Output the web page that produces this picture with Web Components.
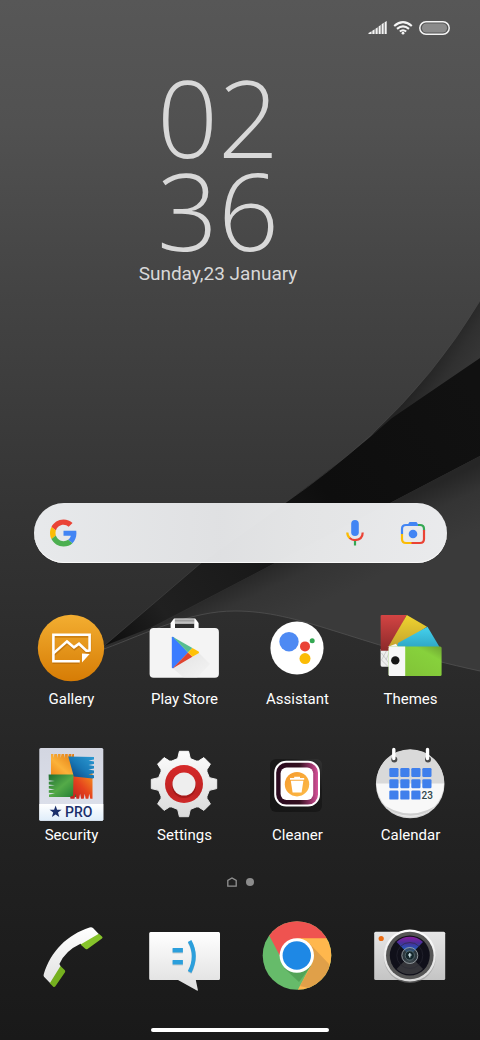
<!DOCTYPE html>
<html lang="en">
<head>
<meta charset="utf-8">
<meta name="viewport" content="width=device-width, initial-scale=1">
<title>Home</title>
<style>
  body {
    margin: 0;
    background: #1b1b1b;
    color: #fff;
    font-family: Roboto, "Liberation Sans", sans-serif;
  }
</style>
</head>
<body>

<home-screen>
  <status-bar slot="status"></status-bar>
  <clock-widget slot="clock" time="02 36">Sunday,23 January</clock-widget>
  <search-widget slot="search"></search-widget>
  <app-grid slot="apps">
    <app-shortcut icon="gallery">Gallery</app-shortcut>
    <app-shortcut icon="play">Play Store</app-shortcut>
    <app-shortcut icon="assistant">Assistant</app-shortcut>
    <app-shortcut icon="themes">Themes</app-shortcut>
    <app-shortcut icon="security">Security</app-shortcut>
    <app-shortcut icon="settings">Settings</app-shortcut>
    <app-shortcut icon="cleaner">Cleaner</app-shortcut>
    <app-shortcut icon="calendar">Calendar</app-shortcut>
  </app-grid>
  <page-indicator slot="pages"></page-indicator>
  <app-grid slot="dock">
    <app-shortcut icon="phone"></app-shortcut>
    <app-shortcut icon="messages"></app-shortcut>
    <app-shortcut icon="chrome"></app-shortcut>
    <app-shortcut icon="camera"></app-shortcut>
  </app-grid>
</home-screen>

<script>
// outline of a gear with 8 teeth around (40, 40)
function gearPath() {
  const shape = [[-17, 26], [-13, 27], [-8, 33], [8, 33], [13, 27], [17, 26]];
  const points = [];
  for (let i = 0; i < 8; i++) {
    for (const [deg, r] of shape) {
      const a = (i * 45 + deg - 90) * Math.PI / 180;
      points.push((40 + r * Math.cos(a)).toFixed(1) + ' ' + (40 + r * Math.sin(a)).toFixed(1));
    }
  }
  return 'M' + points.join('L') + 'Z';
}

function calendarDays() {
  let out = '';
  for (let row = 0; row < 3; row++) {
    for (let col = 0; col < 4; col++) {
      if (row === 2 && col === 3) continue;
      out += `<rect x="${19.3 + col * 11}" y="${24 + row * 11.3}" width="9.2" height="9" rx="1.2"/>`;
    }
  }
  return out;
}

const ICONS = {
  gallery: `
    <defs>
      <linearGradient id="g" x1="0" y1="0" x2="0" y2="1">
        <stop offset="0" stop-color="#f3ae31"/><stop offset="1" stop-color="#d67c05"/>
      </linearGradient>
    </defs>
    <circle cx="40" cy="40" r="33.2" fill="url(#g)"/>
    <g fill="none" stroke="#a85e00" stroke-opacity=".45" stroke-width="2.6" transform="translate(.4 1.6)">
      <path d="M47.8 53.2H22.4V26.8H58.6V42"/>
      <path d="M22.4 45.4L36 33.4l7 6 5-3.6 7.4 7h3.4"/>
    </g>
    <g fill="none" stroke="#fff" stroke-width="2.6">
      <path d="M48.8 53.3H22.4V26.8H58.6V43.4"/>
      <path d="M22.4 45.4L36 33.4l7 6 5-3.6 7.4 7h3.2"/>
    </g>
    <path d="M51 45.4L58.6 46 51 54.4z" fill="#fff"/>`,

  play: `
    <defs>
      <linearGradient id="h" x1="0" y1="0" x2="0" y2="1">
        <stop offset="0" stop-color="#8a8a8a"/><stop offset="1" stop-color="#d0d0d0"/>
      </linearGradient>
      <linearGradient id="sh" x1="0" y1="0" x2="1" y2="1">
        <stop offset="0" stop-color="#c9c9c9"/><stop offset="1" stop-color="#f4f4f4"/>
      </linearGradient>
    </defs>
    <path d="M26.6 21v-6l3.4-4.4h21.2l3.4 4.4v6h-4.4v-5.6H31V21z" fill="#fff"/>
    <path d="M30.8 11.4h19.6v4H30.8z" fill="url(#h)"/>
    <rect x="5.6" y="20" width="69.3" height="49.8" rx="4" fill="#f4f4f4"/>
    <path d="M29 60.5L55 45 66 56 53 69.8H40z" fill="url(#sh)" opacity=".4"/>
    <path d="M27.8 29.5V59.5Q28 60.8 29.6 60L44 44.4 29.600 29Q28 28.200 27.800 29.500z" fill="#3b7cff"/>
    <path d="M28.600 28.700L48.400 40 44 44.400z" fill="#57bd90"/>
    <path d="M28.600 60.400L48.400 48.800 44 44.400z" fill="#df4430"/>
    <path d="M48.400 40L54.600 43.500Q55.600 44.400 54.600 45.300L48.400 48.800 44 44.400z" fill="#ffc107"/>`,

  assistant: `
    <circle cx="40" cy="40" r="26.6" fill="#fff"/>
    <circle cx="32" cy="33.7" r="9.7" fill="#4e8af3"/>
    <circle cx="48" cy="38.4" r="5" fill="#ea4335"/>
    <circle cx="55.2" cy="32.7" r="2.5" fill="#34a853"/>
    <circle cx="48" cy="50.6" r="5.5" fill="#fbbc05"/>`,

  themes: `
    <defs>
      <linearGradient id="r" x1="0" y1="0" x2="0" y2="1">
        <stop offset="0" stop-color="#d34443"/><stop offset="1" stop-color="#8c2a2a"/>
      </linearGradient>
      <linearGradient id="y" x1="0" y1="0" x2="0" y2="1">
        <stop offset="0" stop-color="#f0d42f"/><stop offset="1" stop-color="#c6a52d"/>
      </linearGradient>
      <linearGradient id="b" x1="0" y1="0" x2="0" y2="1">
        <stop offset="0" stop-color="#45d2ee"/><stop offset="1" stop-color="#2fa8c6"/>
      </linearGradient>
      <linearGradient id="gr" x1="0" y1="1" x2="1" y2="0">
        <stop offset="0" stop-color="#80bf36"/><stop offset=".75" stop-color="#87d13c"/><stop offset="1" stop-color="#6da332"/>
      </linearGradient>
    </defs>
    <path d="M10.600 41H26V58.700H12Q10.600 58.700 10.600 57z" fill="#eee"/>
    <path d="M18 40L11.500 52l7 7M11.500 45l8 11M21 40l-5 12" fill="none" stroke="#b5b5b5" stroke-width=".6"/>
    <path d="M12 7H36.500L19 42.700H10.600V8Q10.600 7 12 7z" fill="url(#r)"/>
    <path d="M36.800 7L57 18.700 27.500 38.500H18.500z" fill="url(#y)"/>
    <path d="M57.500 18.700L69.500 39H27L28 35z" fill="url(#b)"/>
    <path d="M17.500 39L26 35.800 28 39z" fill="#f6f6f6"/>
    <rect x="18.600" y="38.500" width="53" height="29.500" rx="1.500" fill="url(#gr)"/>
    <path d="M20 38.500H35.200V68H20Q18.600 68 18.600 66.500V40Q18.600 38.500 20 38.500z" fill="#f7f7f7"/>
    <circle cx="25.300" cy="52.400" r="4.200" fill="#161616"/>`,

  security: `
    <defs>
      <linearGradient id="t" x1="0" y1="0" x2="0" y2="1">
        <stop offset="0" stop-color="#d3d6e1"/><stop offset="1" stop-color="#dde1ec"/>
      </linearGradient>
      <linearGradient id="w" x1="0" y1="0" x2="0" y2="1">
        <stop offset="0" stop-color="#fff"/><stop offset="1" stop-color="#dfedfa"/>
      </linearGradient>
      <linearGradient id="o" x1="1" y1="0" x2="0" y2="1">
        <stop offset="0" stop-color="#e27a12"/><stop offset=".6" stop-color="#fbb23a"/><stop offset="1" stop-color="#f08a1c"/>
      </linearGradient>
      <linearGradient id="bl" x1="0" y1="1" x2="1" y2="0">
        <stop offset="0" stop-color="#0c3e78"/><stop offset=".5" stop-color="#1878b6"/><stop offset="1" stop-color="#2c9ad2"/>
      </linearGradient>
      <linearGradient id="gn" x1="0" y1="0" x2="1" y2="1">
        <stop offset="0" stop-color="#1e6d32"/><stop offset=".5" stop-color="#54aa48"/><stop offset="1" stop-color="#1f7c35"/>
      </linearGradient>
      <linearGradient id="rd" x1="0" y1="1" x2="1" y2="0">
        <stop offset="0" stop-color="#bc1c20"/><stop offset=".5" stop-color="#e5431d"/><stop offset="1" stop-color="#f6951e"/>
      </linearGradient>
    </defs>
    <rect x="8.300" y="4" width="64" height="72.800" rx="1.500" fill="url(#t)"/>
    <path d="M8.300 60H72.300V75.300Q72.300 76.800 70.800 76.800H9.800Q8.300 76.800 8.300 75.300z" fill="url(#w)"/>
    <path d="M20 31V10h2.400v4l1-4h2.600v4l1-4h2.600v4l1-4h2.600v4l1-4h2.600v4l1-4h2.600v4l1-4h1.600V31z" fill="url(#o)"/>
    <path d="M17.600 30.500H45V53H18v-2.600l6-.8-6.200-.8v-2.600l6-.8-6-.8v-2.600l6-.8-6-.8v-2.600l6-.8-6-.8z" fill="url(#gn)"/>
    <path d="M42.500 31L61.500 29V54.800h-2.200l-1-5-1 5h-2.600l-1-5-1 5h-2.600l-1-5-1 5h-2.600l-1-5-1 5h-4l-.4-2 3-1z" fill="url(#rd)"/>
    <path d="M37.300 12.500L63 13v2.400l-5.500 1 5.500 1v2.600l-5.500 1 5.500 1v2.600l-5.500 1 5.500 1v2.600l-5.500 1 5.500 1v2.800L61.500 34.500 42.800 32.500z" fill="url(#bl)"/>
    <path d="M24.600 61.500l1.500 4.200 4.500.1-3.600 2.800 1.300 4.400-3.700-2.600-3.700 2.600 1.300-4.400-3.600-2.800 4.500-.1z" fill="#1b2f6b"/>
    <text x="34" y="73" font-size="14" font-weight="500" fill="#1b2f6b">PRO</text>`,

  settings: `
    <defs>
      <linearGradient id="s" x1="0" y1="0" x2="0" y2="1">
        <stop offset="0" stop-color="#fcfcfc"/><stop offset="1" stop-color="#dadada"/>
      </linearGradient>
      <linearGradient id="k" x1="0" y1="0" x2="0" y2="1">
        <stop offset="0" stop-color="#d62a2a"/><stop offset=".75" stop-color="#bf2222"/><stop offset="1" stop-color="#d02a2a"/>
      </linearGradient>
      <linearGradient id="kn" x1="0" y1="0" x2="0" y2="1">
        <stop offset="0" stop-color="#8c1818"/><stop offset="1" stop-color="#9c1515"/>
      </linearGradient>
    </defs>
    <path d="${gearPath()}" fill="url(#s)" stroke="url(#s)" stroke-width="1" stroke-linejoin="round"/>
    <circle cx="40" cy="40" r="19" fill="url(#k)"/>
    <circle cx="40" cy="42" r="12" fill="url(#kn)" opacity=".7"/>
    <circle cx="40" cy="40" r="11.500" fill="#eee"/>`,

  cleaner: `
    <defs>
      <linearGradient id="p" x1="0" y1="0" x2="1" y2="0">
        <stop offset="0" stop-color="#2b0a20"/><stop offset=".55" stop-color="#33101f"/><stop offset=".85" stop-color="#a33a72"/><stop offset="1" stop-color="#e0569f"/>
      </linearGradient>
      <linearGradient id="sq" x1="0" y1="1" x2="1" y2="0">
        <stop offset="0" stop-color="#151515"/><stop offset=".7" stop-color="#1a1a1a"/><stop offset="1" stop-color="#343434"/>
      </linearGradient>
      <linearGradient id="c" x1="0" y1="0" x2="1" y2="1">
        <stop offset="0" stop-color="#f59a2c"/><stop offset="1" stop-color="#fdbb48"/>
      </linearGradient>
    </defs>
    <rect x="13" y="15" width="52" height="53" rx="6" fill="url(#sq)"/>
    <rect x="18.200" y="17.800" width="43.800" height="43.800" rx="11" fill="url(#p)" stroke="#fff" stroke-width="2"/>
    <rect x="23.600" y="23.500" width="32.600" height="32.600" rx="6" fill="#fff"/>
    <circle cx="40" cy="40.200" r="12.200" fill="url(#c)"/>
    <path d="M33 34H37.200V32.800H43V34H47.200V35.800H33z M33.800 36.800H46.400L44.600 48.400H35.600z" fill="#fff"/>`,

  calendar: `
    <defs>
      <clipPath id="cc"><circle cx="40.200" cy="39" r="33.800"/></clipPath>
    </defs>
    <circle cx="40.200" cy="40" r="34.300" fill="#d6d6d6"/>
    <g clip-path="url(#cc)">
      <rect x="5" y="4" width="71" height="36" fill="#d9d9d9"/>
      <rect x="5" y="39.500" width="71" height="35" fill="#f8f8f8"/>
      <path d="M8 57Q40.500 82 73 57V64Q40.500 86 8 64z" fill="#cfcfcf"/>
      <path d="M8 59.500Q40.500 84 73 59.500V74H8z" fill="#ededed"/>
    </g>
    <g fill="#3f7fec">${calendarDays()}</g>
    <circle cx="24.300" cy="15.500" r="3" fill="#4a4a4a"/>
    <circle cx="58" cy="15.500" r="3" fill="#4a4a4a"/>
    <path d="M23.800 5.500v9M57.500 5.500v9" stroke="#fff" stroke-width="3.400" stroke-linecap="round"/>
    <text x="51.500" y="55.300" font-size="10" font-weight="500" fill="#31464c">23</text>`,

  phone: `
    <defs>
      <linearGradient id="ph" x1="0" y1="0" x2="0" y2="1">
        <stop offset="0" stop-color="#fff"/><stop offset="1" stop-color="#e2e2e2"/>
      </linearGradient>
    </defs>
    <path d="M58.500 11.500Q60.500 10.600 62 12L68 18.200 53 29.500 49.500 27.800Q34 35 28.400 48L30 51 19.500 67.500 13 60.800Q12.200 59.800 12.800 58C20 35 36 19 58.500 11.500z" fill="url(#ph)"/>
    <path d="M67.800 17.800L71 20.600Q72.200 21.700 71 22.600L56.500 33Q55.200 33.800 54 32.600L49.500 28.400z" fill="#86c32b"/>
    <path d="M29.500 50L33.600 54Q34.700 55 34 56.300L24.400 70.200Q23.300 71.600 22 70.400L18.800 67.300z" fill="#75b01f"/>`,

  messages: `
    <defs>
      <linearGradient id="m" x1="0" y1="0" x2="0" y2="1">
        <stop offset="0" stop-color="#fff"/><stop offset="1" stop-color="#dedede"/>
      </linearGradient>
    </defs>
    <path d="M6.600 16H74.600Q76 16 76 17.500V62.500Q76 64 74.600 64H51.800L53.900 74Q54 75 52.900 74.500L34 64H6.600Q5.200 64 5.200 62.500V17.500Q5.200 16 6.600 16z" fill="url(#m)"/>
    <g opacity=".6" transform="translate(0 1)">
      <path d="M28.600 32h10.300v4.600H28.600zM28.600 44h10.300v4.600H28.600z" fill="#b5b5b5"/>
      <path d="M45.600 25Q54 40 45.600 56" fill="none" stroke="#b5b5b5" stroke-width="4"/>
    </g>
    <path d="M28.600 32h10.300v4.600H28.600zM28.600 44h10.300v4.600H28.600z" fill="#2b9fdc"/>
    <path d="M45.600 25Q54 40 45.600 56" fill="none" stroke="#2b9fdc" stroke-width="4"/>`,

  chrome: `
    <defs>
      <clipPath id="ch"><circle cx="40" cy="39.500" r="34.300"/></clipPath>
    </defs>
    <g clip-path="url(#ch)">
      <rect width="80" height="80" fill="#66bb6a"/>
      <path d="M40 22H80V80H37.500L41 73.500 55.500 46z" fill="#ffb74d"/>
      <path d="M0 0H80V22.200H40L23.500 41 12.500 20z" fill="#ef5350"/>
      <path d="M53 28L72 48V58L60 74 43 70 55.500 47z" fill="#d09347" opacity=".65"/>
      <path d="M27 52L42 66 54 50z" fill="#4b9850" opacity=".7"/>
    </g>
    <circle cx="39.800" cy="39.500" r="17.200" fill="#fff"/>
    <circle cx="39.800" cy="39.500" r="14.200" fill="#1e88e5"/>`,

  camera: `
    <defs>
      <linearGradient id="bd" x1="0" y1="0" x2="0" y2="1">
        <stop offset="0" stop-color="#e6e6e6"/><stop offset="1" stop-color="#c4c4c4"/>
      </linearGradient>
      <linearGradient id="rg" x1="0" y1="0" x2="0" y2="1">
        <stop offset="0" stop-color="#fff"/><stop offset="1" stop-color="#d9d9d9"/>
      </linearGradient>
      <linearGradient id="gl" x1="0" y1="0" x2="0" y2="1">
        <stop offset="0" stop-color="#8a1ea0"/><stop offset=".35" stop-color="#463099"/><stop offset=".7" stop-color="#1f5fc0"/><stop offset="1" stop-color="#2a8ad0"/>
      </linearGradient>
    </defs>
    <rect x="4.200" y="15.800" width="71" height="48.200" rx="1.500" fill="url(#bd)"/>
    <circle cx="11.200" cy="22.500" r="2.600" fill="#ec6b10"/>
    <circle cx="39.800" cy="41" r="26" fill="#8d8d8d" opacity=".5"/>
    <circle cx="39.800" cy="39.500" r="26" fill="url(#rg)"/>
    <circle cx="39.800" cy="39.500" r="23.800" fill="#555"/>
    <circle cx="39.800" cy="39.500" r="20" fill="#10101a"/>
    <path d="M39.800 39.500L26.600 26A19 19 0 0 1 53 26z" fill="url(#gl)"/>
    <path d="M39.800 39.500L26.600 53A19 19 0 0 0 53 53z" fill="#35353a"/>
    <circle cx="39.800" cy="39.500" r="13" fill="none" stroke="#2a2a36" stroke-opacity=".6"/>
    <circle cx="39.800" cy="39.500" r="8" fill="#3c4a50" fill-opacity=".7" stroke="#a8b0b4" stroke-width=".8"/>
    <circle cx="39.800" cy="39.500" r="4.600" fill="#14262b" stroke="#5f757a" stroke-width=".8"/>
    <path d="M39.800 37v4.600M38 39h3.600" stroke="#d9f0f5" stroke-width="1.200"/>`
};

class ScreenWallpaper extends HTMLElement {
  constructor() {
    super();
    this.attachShadow({ mode: 'open' });
    this.shadowRoot.innerHTML = `
      <style>
        :host { display: block; }
        svg { display: block; width: 100%; height: 100%; }
      </style>
      <svg viewBox="0 0 480 1040" preserveAspectRatio="none" aria-hidden="true">
        <defs>
          <linearGradient id="base" x1="0" y1="0" x2="0" y2="1">
            <stop offset="0" stop-color="#575757"/>
            <stop offset=".12" stop-color="#515151"/>
            <stop offset=".29" stop-color="#434343"/>
            <stop offset=".48" stop-color="#353535"/>
            <stop offset=".64" stop-color="#2b2b2b"/>
            <stop offset=".8" stop-color="#222"/>
            <stop offset="1" stop-color="#191919"/>
          </linearGradient>
          <linearGradient id="fold" gradientUnits="userSpaceOnUse" x1="425" y1="370" x2="460" y2="392">
            <stop offset="0" stop-color="#232323"/>
            <stop offset=".5" stop-color="#303030"/>
            <stop offset="1" stop-color="#373737"/>
          </linearGradient>
          <linearGradient id="band" gradientUnits="userSpaceOnUse" x1="105" y1="645" x2="480" y2="400">
            <stop offset="0" stop-color="#0d0d0d"/>
            <stop offset=".15" stop-color="#202020"/>
            <stop offset=".35" stop-color="#1a1a1a"/>
            <stop offset=".6" stop-color="#0e0e0e"/>
            <stop offset="1" stop-color="#111"/>
          </linearGradient>
          <linearGradient id="panel" gradientUnits="userSpaceOnUse" x1="250" y1="572" x2="275" y2="625">
            <stop offset="0" stop-color="#262626"/>
            <stop offset=".4" stop-color="#343434"/>
            <stop offset="1" stop-color="#3a3a3a"/>
          </linearGradient>
        </defs>
        <rect width="480" height="1040" fill="url(#base)"/>
        <path d="M480 301Q435 376 370 436L480 358z" fill="url(#fold)"/>
        <path d="M480 358L392 418Q345 460 285 503L201 563 104 646 150 628 275 563 390 503 480 456z" fill="url(#band)"/>
        <path d="M480 456L390 503 275 563 160 624 104 649C150 632 190 611 235 611C300 611 350 643 480 671z" fill="url(#panel)"/>
        <path d="M104 649C150 632 190 611 235 611C300 611 350 643 480 671" fill="none" stroke="#505050" stroke-opacity=".8"/>
        <path d="M480 301Q435 376 370 436Q330 472 285 503L201 563 104 646" fill="none" stroke="#4a4a4a" stroke-opacity=".5"/>
      </svg>`;
  }
}
customElements.define('screen-wallpaper', ScreenWallpaper);

class HomeScreen extends HTMLElement {
  constructor() {
    super();
    this.attachShadow({ mode: 'open' });
    this.shadowRoot.innerHTML = `
      <style>
        :host {
          position: relative;
          display: flex;
          flex-direction: column;
          min-height: 100vh;
          overflow: hidden;
        }
        screen-wallpaper {
          position: absolute;
          inset: 0;
          z-index: -1;
        }
        main {
          display: flex;
          flex-direction: column;
          flex: 1;
        }
        .apps {
          margin-top: auto;
          display: flex;
          flex-direction: column;
        }
        slot[name="apps"] { display: block; margin-top: 45px; }
        slot[name="pages"] { display: block; margin: 28px 0 26px; }
        .bar {
          align-self: center;
          width: 37%;
          height: 4px;
          margin: 32px 0 8px;
          border-radius: 2px;
          background: #fff;
        }
      </style>
      <screen-wallpaper></screen-wallpaper>
      <slot name="status"></slot>
      <main>
        <slot name="clock"></slot>
        <div class="apps">
          <slot name="search"></slot>
          <slot name="apps"></slot>
          <slot name="pages"></slot>
          <slot name="dock"></slot>
          <div class="bar"></div>
        </div>
      </main>`;
  }
}
customElements.define('home-screen', HomeScreen);

class StatusBar extends HTMLElement {
  constructor() {
    super();
    this.attachShadow({ mode: 'open' });
    this.shadowRoot.innerHTML = `
      <style>
        :host {
          display: flex;
          justify-content: flex-end;
          align-items: center;
          gap: 6px;
          height: 56px;
          padding-right: 30px;
        }
      </style>
      <svg width="19" height="14" viewBox="0 0 19 14" fill="#f4f4f4" role="img" aria-label="Signal">
        <path d="M.5 12L3.600 10.200V13H.5zM4.300 9.800L6.600 8.300V13H4.300zM7.500 7.800L9.700 6.200V13H7.500zM10.600 5.500L12.700 4V13H10.600zM13.600 3.300L15.700 1.800V13H13.600zM16.600 1.200L18.700 0V13H16.600z"/>
      </svg>
      <svg width="20" height="14" viewBox="0 0 20 14" fill="none" stroke="#f4f4f4" stroke-width="2.100" role="img" aria-label="Wi-Fi">
        <path d="M1.200 5Q10-2.600 18.800 5M4 7.900Q10 2.900 16 7.900M6.800 10.500Q10 8 13.200 10.500"/>
        <circle cx="10" cy="12.200" r="1.400" fill="#f4f4f4" stroke="none"/>
      </svg>
      <svg width="31" height="14" viewBox="0 0 31 14" role="img" aria-label="Battery">
        <rect x=".8" y=".8" width="29.400" height="12.400" rx="6.200" fill="none" stroke="#f4f4f4" stroke-width="1.500"/>
        <rect x="3" y="2.600" width="25" height="8.800" rx="4.200" fill="#8b8b8b"/>
      </svg>`;
  }
}
customElements.define('status-bar', StatusBar);

class ClockWidget extends HTMLElement {
  constructor() {
    super();
    this.attachShadow({ mode: 'open' });
    this.shadowRoot.innerHTML = `
      <style>
        :host {
          display: flex;
          flex-direction: column;
          align-items: center;
          padding: 14px 44px 0 0;
          text-align: center;
          color: #d8d8d8;
        }
        /* hours and minutes wrap onto a line each */
        time {
          width: min-content;
          font: 350 107px/93px "Open Sans", "Noto Sans", sans-serif;
        }
        .date {
          margin-top: 6px;
          font-size: 19px;
          line-height: 24px;
        }
      </style>
      <time></time>
      <div class="date"><slot></slot></div>`;
  }

  connectedCallback() {
    this.shadowRoot.querySelector('time').textContent = this.getAttribute('time');
  }
}
customElements.define('clock-widget', ClockWidget);

class SearchWidget extends HTMLElement {
  constructor() {
    super();
    this.attachShadow({ mode: 'open' });
    this.shadowRoot.innerHTML = `
      <style>
        :host { display: block; padding: 0 33px 0 34px; }
        form {
          display: flex;
          align-items: center;
          height: 60px;
          box-sizing: border-box;
          padding: 0 14px 0 16px;
          border-radius: 30px;
          background: linear-gradient(90deg, #eef0f2f6, #e6e7e9f6 45%, #ebecedf6 65%, #f0f1f3f6);
          box-shadow: inset 0 -1px #f8f8f8;
        }
        input {
          flex: 1;
          min-width: 0;
          height: 40px;
          padding: 0 12px;
          border: 0;
          outline: 0;
          background: none;
          font: 16px Roboto, sans-serif;
        }
        button {
          display: flex;
          align-items: center;
          justify-content: center;
          width: 40px;
          height: 40px;
          padding: 0;
          border: 0;
          background: none;
          cursor: pointer;
        }
        button + button { margin-left: 18px; }
      </style>
      <form role="search">
        <svg width="27" height="28" viewBox="0 0 48 48" aria-hidden="true">
          <path fill="#ea4335" d="M24 9.500c3.540 0 6.710 1.220 9.210 3.600l6.850-6.850C35.900 2.380 30.470 0 24 0 14.620 0 6.510 5.380 2.560 13.220l7.980 6.190C12.430 13.720 17.740 9.500 24 9.500z"/>
          <path fill="#4285f4" d="M46.980 24.550c0-1.570-.15-3.090-.38-4.550H24v9.020h12.940c-.58 2.960-2.260 5.480-4.780 7.180l7.730 6c4.510-4.180 7.090-10.360 7.090-17.650z"/>
          <path fill="#fbbc05" d="M10.530 28.590c-.48-1.450-.76-2.990-.76-4.590s.27-3.140.76-4.590l-7.980-6.190C.92 16.460 0 20.120 0 24c0 3.880.92 7.540 2.560 10.780l7.970-6.190z"/>
          <path fill="#4caf50" d="M24 48c6.480 0 11.930-2.130 15.890-5.810l-7.730-6c-2.150 1.450-4.920 2.300-8.160 2.300-6.260 0-11.570-4.220-13.470-9.910l-7.980 6.190C6.510 42.620 14.620 48 24 48z"/>
        </svg>
        <input type="search" aria-label="Search">
        <button type="button" aria-label="Voice search">
          <svg width="18" height="26" viewBox="0 0 18 26" fill="none" stroke-width="2.200">
            <rect x="5.200" y="0" width="7.600" height="16" rx="3.800" fill="#4285f4"/>
            <path d="M1.300 12.500Q1.300 16 4 18.300" stroke="#fbbc05"/>
            <path d="M3.600 18Q6 20.200 9 20.200Q16.700 19.600 16.700 12.500" stroke="#ea4335"/>
            <path d="M9 21v4.500" stroke="#34a853"/>
          </svg>
        </button>
        <button type="button" aria-label="Search with camera">
          <svg width="26" height="24" viewBox="0 0 26 24" fill="none" stroke-width="2.200">
            <path d="M2 13V8Q2 4 6 4H19" stroke="#4285f4"/>
            <path d="M7.500 4L9.500 1H16.500L18.500 4z" fill="#4285f4"/>
            <path d="M18 4H20Q24 4 24 8V9.500" stroke="#34a853"/>
            <path d="M24 9V18Q24 22 20 22H11" stroke="#ea4335"/>
            <path d="M2 13V18Q2 22 6 22H11.500" stroke="#fbbc05"/>
            <circle cx="13" cy="13" r="4.300" fill="#4285f4"/>
          </svg>
        </button>
      </form>`;
  }
}
customElements.define('search-widget', SearchWidget);

class AppGrid extends HTMLElement {
  constructor() {
    super();
    this.attachShadow({ mode: 'open' });
    this.shadowRoot.innerHTML = `
      <style>
        :host {
          display: grid;
          grid-template-columns: repeat(4, 1fr);
          row-gap: 34px;
          padding: 0 13px 0 15px;
        }
      </style>
      <slot></slot>`;
  }
}
customElements.define('app-grid', AppGrid);

class AppShortcut extends HTMLElement {
  constructor() {
    super();
    this.attachShadow({ mode: 'open' });
    this.shadowRoot.innerHTML = `
      <style>
        :host { display: block; }
        a {
          display: flex;
          flex-direction: column;
          align-items: center;
          color: inherit;
          text-decoration: none;
          font-size: 15px;
          line-height: 22px;
        }
        svg { display: block; }
      </style>
      <a href="#">
        <svg width="81" height="80" viewBox="0 0 81 80" font-family="Roboto, sans-serif"></svg>
        <slot></slot>
      </a>`;
  }

  connectedCallback() {
    const name = this.getAttribute('icon');
    this.shadowRoot.querySelector('svg').innerHTML = ICONS[name];
    if (!this.textContent.trim()) {
      this.shadowRoot.querySelector('a').setAttribute('aria-label', name);
    }
  }
}
customElements.define('app-shortcut', AppShortcut);

class PageIndicator extends HTMLElement {
  constructor() {
    super();
    this.attachShadow({ mode: 'open' });
    this.shadowRoot.innerHTML = `
      <style>
        :host {
          display: flex;
          justify-content: center;
          align-items: center;
          gap: 9px;
          height: 16px;
        }
        .dot {
          width: 8px;
          height: 8px;
          border-radius: 50%;
          background: #8c8c8c;
        }
      </style>
      <svg width="10" height="10" viewBox="0 0 10 10" fill="none" stroke="#929292" stroke-width="1.300">
        <path d="M.8 9.200V3.400L5 .9l4.200 2.500V9.200z"/>
      </svg>
      <span class="dot"></span>`;
  }
}
customElements.define('page-indicator', PageIndicator);
</script>
</body>
</html>
